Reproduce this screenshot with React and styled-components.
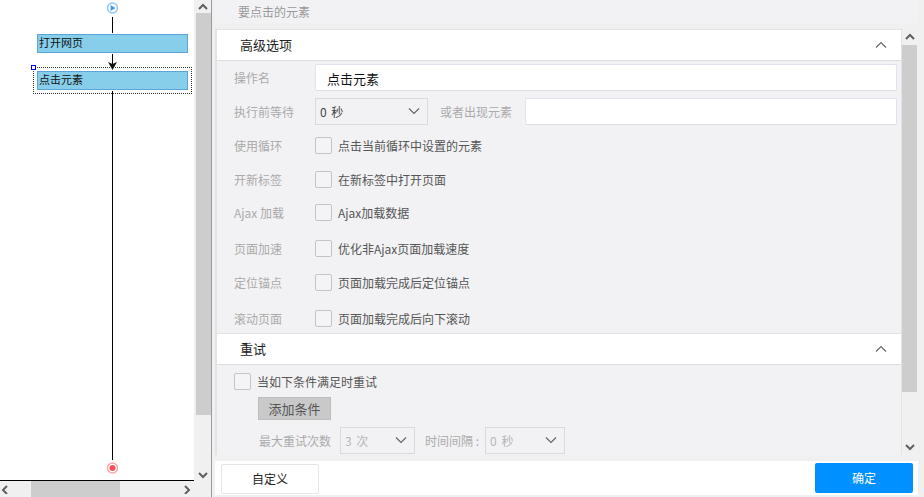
import React from 'react'
import styled, { createGlobalStyle } from 'styled-components'

const GlobalStyle = createGlobalStyle`
  html, body {
    margin: 0;
    padding: 0;
    background: #f0f0f0;
  }
  * {
    box-sizing: border-box;
  }
`

const Page = styled.div`
  display: flex;
  width: 924px;
  height: 497px;
  overflow: hidden;
  background: #f0f0f0;
  font-family: "Noto Sans CJK SC", "Open Sans", sans-serif;
  font-size: 12px;
`

const LeftPane = styled.div`
  display: grid;
  grid-template-columns: 195px 16px;
  grid-template-rows: 481px 16px;
  width: 212px;
  flex-shrink: 0;
  border-right: 1px solid #9a9a9a;
`

const Canvas = styled.div`
  position: relative;
  background: #fff;
  border-bottom: 1px solid #000;
  margin-right: 1px;
`

const FlowLine = styled.div`
  position: absolute;
  left: 112px;
  width: 1px;
  top: ${p => p.$top}px;
  height: ${p => p.$height}px;
  background: #000;
`

const Node = styled.div`
  position: absolute;
  left: 37px;
  top: ${p => p.$top}px;
  width: 151px;
  height: 19px;
  padding-left: 1px;
  background: #87ceeb;
  border: 1px solid #5aa5d6;
  color: #111;
  font-size: 11px;
  line-height: 14px;
`

const Selection = styled.div`
  position: absolute;
  left: 33px;
  top: 67px;
  width: 159px;
  height: 27px;
  border: 1px dotted #333;
`

const Handle = styled.div`
  position: absolute;
  left: 31px;
  top: 65px;
  width: 5px;
  height: 5px;
  background: #fff;
  border: 1px solid #0000e0;
`

const FlowIcon = styled.svg`
  position: absolute;
  left: 106px;
  top: ${p => p.$top}px;
`

const ArrowHead = styled.svg`
  position: absolute;
  left: 108px;
  top: 62px;
`

const VBar = styled.div`
  display: flex;
  flex-direction: column;
  align-items: center;
  width: 16px;
  background: #f0f0f0;
`

const VThumb = styled.div`
  width: 15px;
  flex: ${p => `0 0 ${p.$size}px`};
  background: #cdcdcd;
`

const BarGap = styled.div`
  flex: 1;
`

const ArrowBox = styled.div`
  display: flex;
  align-items: center;
  justify-content: center;
  flex-shrink: 0;
  width: ${p => p.$w || 16}px;
  height: ${p => p.$h || 13}px;
`

const HBar = styled.div`
  display: flex;
  align-items: center;
  background: #f0f0f0;
`

const HThumb = styled.div`
  width: 89px;
  height: 16px;
  margin-left: 19px;
  background: #cdcdcd;
`

const Corner = styled.div`
  background: #f0f0f0;
`

const RightPane = styled.div`
  flex: 1;
  display: flex;
  flex-direction: column;
  min-width: 0;
`

const Caption = styled.div`
  height: 23px;
  margin: 0 6px 0 3px;
  padding-left: 23px;
  background: #f2f2f4;
  color: #999;
  font-size: 12px;
  line-height: 24px;
`

const Body = styled.div`
  display: flex;
  height: 432px;
  padding-top: 6px;
  padding-left: 3px;
`

const Panel = styled.div`
  width: 687px;
  height: 426px;
  overflow: hidden;
  background: #f2f2f4;
  border-left: 2px solid #e2e3e5;
  border-right: 1px solid #e2e3e5;
`

const SectionHead = styled.div`
  display: flex;
  align-items: center;
  justify-content: space-between;
  height: 32px;
  padding: 0 14px 2px 23px;
  background: #fff;
  border-top: 1px solid #e2e3e5;
  border-bottom: 1px solid #dcdde0;
  color: #222;
  font-size: 13px;
`

const Rows = styled.div`
  display: flex;
  flex-direction: column;
  padding-top: 1px;
`

const Row = styled.div`
  display: flex;
  align-items: center;
  height: 30px;
  margin-top: ${p => p.$mt}px;
  padding-left: 17px;
`

const RowLabel = styled.div`
  width: 81px;
  color: #aaa;
  font-size: 12px;
  flex-shrink: 0;
`

const TextInput = styled.div`
  width: ${p => p.$w}px;
  height: 27px;
  padding-left: 11px;
  background: #fff;
  border: 1px solid #dfe3f0;
  border-bottom-color: #dcdde0;
  border-radius: 2px;
  color: #111;
  font-size: 13px;
  line-height: 27px;
`

const Select = styled.div`
  display: flex;
  align-items: center;
  justify-content: space-between;
  width: ${p => p.$w}px;
  height: 27px;
  padding: 0 7px 0 4px;
  border: 1px solid #d8dadd;
  color: ${p => (p.$muted ? '#b5b5b5' : '#444')};
  font-size: 12px;
  word-spacing: 2px;
  flex-shrink: 0;
`

const InlineLabel = styled.div`
  color: #aaa;
  font-size: 12px;
  margin: 0 ${p => p.$right}px 0 ${p => p.$left}px;
  white-space: nowrap;
`

const Box = styled.div`
  width: 17px;
  height: 17px;
  background: #f4f4f6;
  border: 1px solid #c4c4c4;
  border-radius: 2px;
  flex-shrink: 0;
`

const CheckText = styled.div`
  margin-left: 6px;
  color: #555;
  font-size: 12px;
`

const RetryCheck = styled.div`
  display: flex;
  align-items: center;
  padding: 8px 0 0 17px;
`

const AddButton = styled.div`
  width: 73px;
  height: 23px;
  margin: 7px 0 0 41px;
  background: #c9c9c9;
  border: 1px solid #bdbdbd;
  color: #555;
  font-size: 13px;
  line-height: 21px;
  text-align: center;
`

const RetryRow = styled.div`
  display: flex;
  align-items: center;
  margin-top: 7px;
  padding-left: 42px;
`

const MainScroll = styled(VBar)`
  width: 15px;
  height: 426px;
`

const Footer = styled.div`
  display: flex;
  align-items: center;
  justify-content: space-between;
  height: 34px;
  margin: 6px 6px 0 3px;
  padding: 0 5px 0 6px;
  background: #fff;
`

const CustomButton = styled.div`
  width: 98px;
  height: 30px;
  margin-top: 1px;
  background: #fff;
  border: 1px solid #e6e6e6;
  border-radius: 2px;
  color: #222;
  font-size: 12px;
  line-height: 28px;
  text-align: center;
`

const ConfirmButton = styled.div`
  width: 98px;
  height: 30px;
  margin-top: -1px;
  background: #0090ff;
  border-radius: 2px;
  color: #fff;
  font-size: 12px;
  line-height: 30px;
  text-align: center;
`

const ScrollArrow = ({ dir }) => {
  const points = {
    up: '1,6 5,2 9,6',
    down: '1,2 5,6 9,2',
    left: '6,1 2,5 6,9',
    right: '2,1 6,5 2,9',
  }
  return (
    <svg width="10" height="10" viewBox="0 0 10 8" fill="none">
      <polyline points={points[dir]} stroke="#606060" strokeWidth="2" />
    </svg>
  )
}

const Chevron = ({ up }) => (
  <svg width="12" height="7" viewBox="0 0 12 7" fill="none">
    <polyline points={up ? '1,6.5 6,1.5 11,6.5' : '1,.5 6,5.5 11,.5'} stroke="#666" strokeWidth="1.2" />
  </svg>
)

const options = [
  { label: '使用循环', text: '点击当前循环中设置的元素', mt: 4 },
  { label: '开新标签', text: '在新标签中打开页面', mt: 4 },
  { label: 'Ajax 加载', text: 'Ajax加载数据', mt: 3 },
  { label: '页面加速', text: '优化非Ajax页面加载速度', mt: 6 },
  { label: '定位锚点', text: '页面加载完成后定位锚点', mt: 4 },
  { label: '滚动页面', text: '页面加载完成后向下滚动', mt: 6 },
]

const App = () => {
  return (
    <Page>
      <GlobalStyle />
      <LeftPane>
        <Canvas>
          <FlowIcon $top={1} width="13" height="13" viewBox="0 0 13 13">
            <circle cx="6.5" cy="7" r="5" fill="#fff" stroke="#8cc8f5" strokeWidth="1.4" />
            <path d="M4.6 3.9 L9.4 7 L4.6 10.1 Z" fill="#3c9be8" />
          </FlowIcon>
          <FlowLine $top={17} $height={16} />
          <Node $top={34}>打开网页</Node>
          <FlowLine $top={54} $height={14} />
          <ArrowHead width="9" height="8" viewBox="0 0 9 8">
            <path d="M0 0 L4.5 2 L9 0 L4.5 8 Z" fill="#111" />
          </ArrowHead>
          <Selection />
          <Handle />
          <Node $top={71}>点击元素</Node>
          <FlowLine $top={91} $height={369} />
          <FlowIcon $top={462} width="13" height="13" viewBox="0 0 13 13">
            <circle cx="6.5" cy="6" r="5" fill="#fff" stroke="#ffa5a8" strokeWidth="1.4" />
            <circle cx="6.5" cy="6" r="3" fill="#fb5058" />
          </FlowIcon>
        </Canvas>
        <VBar>
          <ArrowBox><ScrollArrow dir="up" /></ArrowBox>
          <VThumb $size={402} />
          <BarGap />
          <ArrowBox><ScrollArrow dir="down" /></ArrowBox>
        </VBar>
        <HBar>
          <ArrowBox $w={12} $h={16}><ScrollArrow dir="left" /></ArrowBox>
          <HThumb />
          <BarGap />
          <ArrowBox $w={14} $h={16}><ScrollArrow dir="right" /></ArrowBox>
        </HBar>
        <Corner />
      </LeftPane>
      <RightPane>
        <Caption>要点击的元素</Caption>
        <Body>
          <Panel>
            <SectionHead>高级选项<Chevron up /></SectionHead>
            <Rows>
              <Row $mt={0}>
                <RowLabel>操作名</RowLabel>
                <TextInput $w={582}>点击元素</TextInput>
              </Row>
              <Row $mt={4}>
                <RowLabel>执行前等待</RowLabel>
                <Select $w={113}>0 秒<Chevron /></Select>
                <InlineLabel $left={12} $right={13}>或者出现元素</InlineLabel>
                <TextInput $w={372} />
              </Row>
              {options.map(item => (
                <Row $mt={item.mt} key={item.label}>
                  <RowLabel>{item.label}</RowLabel>
                  <Box />
                  <CheckText>{item.text}</CheckText>
                </Row>
              ))}
            </Rows>
            <SectionHead>重试<Chevron up /></SectionHead>
            <RetryCheck>
              <Box />
              <CheckText>当如下条件满足时重试</CheckText>
            </RetryCheck>
            <AddButton>添加条件</AddButton>
            <RetryRow>
              <InlineLabel $left={0} $right={9}>最大重试次数</InlineLabel>
              <Select $w={75} $muted>3 次<Chevron /></Select>
              <InlineLabel $left={10} $right={6}>时间间隔 :</InlineLabel>
              <Select $w={80} $muted>0 秒<Chevron /></Select>
            </RetryRow>
          </Panel>
          <MainScroll>
            <ArrowBox $w={15} $h={16}><ScrollArrow dir="up" /></ArrowBox>
            <VThumb $size={347} />
            <BarGap />
            <ArrowBox $w={15} $h={16}><ScrollArrow dir="down" /></ArrowBox>
          </MainScroll>
        </Body>
        <Footer>
          <CustomButton>自定义</CustomButton>
          <ConfirmButton>确定</ConfirmButton>
        </Footer>
      </RightPane>
    </Page>
  )
}

export default App
